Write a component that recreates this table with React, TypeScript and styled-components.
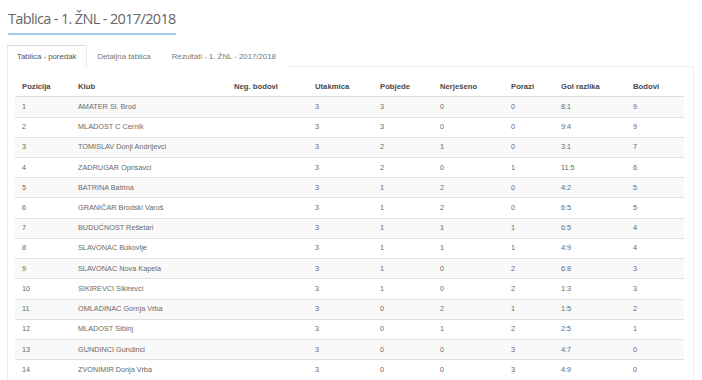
import React from 'react';
import styled, { createGlobalStyle } from 'styled-components';

const GlobalStyle = createGlobalStyle`
  html, body {
    margin: 0;
    padding: 0;
    background: #ffffff;
  }
  body {
    font-family: "Liberation Sans", Arial, sans-serif;
    color: #555;
  }
`;

const Page = styled.div`
  width: 687px;
  padding: 0 0 0 7px;
`;

const Title = styled.h2`
  display: inline-block;
  margin: 9px 0 0 1px;
  padding-bottom: 5px;
  font-family: "Open Sans", "Liberation Sans", sans-serif;
  font-weight: 400;
  font-size: 14.5px;
  line-height: 19px;
  letter-spacing: -0.65px;
  color: #666;
  border-bottom: 2px solid #a6cbe2;
`;

const TabBar = styled.ul`
  display: flex;
  margin: 10px 0 0;
  padding: 0;
  list-style: none;
`;

const Tab = styled.li<{ $active?: boolean }>`
  height: 21px;
  padding: 0 10px 0 9px;
  display: flex;
  align-items: center;
  font-size: 7.8px;
  color: ${(p) => (p.$active ? '#555' : '#777')};
  background: #fff;
  border: 1px solid ${(p) => (p.$active ? '#e3e8ec' : 'transparent')};
  border-top-color: ${(p) => (p.$active ? '#cfe0ea' : 'transparent')};
  border-bottom: none;
  margin-bottom: -1px;
  position: relative;
  z-index: 1;
`;

const Panel = styled.div`
  border: 1px solid #eceeef;
  border-bottom: none;
  padding: 10px 8px 0 7px;
  height: 320px;
`;

const Table = styled.table`
  width: 669px;
  border-collapse: collapse;
  table-layout: fixed;
`;

const HeadCell = styled.th`
  text-align: left;
  font-weight: 700;
  font-size: 7.7px;
  color: #4a4a4a;
  padding: 5.5px 7px;
  line-height: 8.3px;
  border-bottom: 1px solid #dcdcdc;
  white-space: nowrap;
`;

const Row = styled.tr<{ $odd: boolean }>`
  background: ${(p) => (p.$odd ? '#f9f9f9' : '#ffffff')};
`;

const Cell = styled.td`
  font-size: 7.3px;
  color: #6a6a6a;
  padding: 5.5px 7px;
  line-height: 8.23px;
  border-top: 1px solid #e2e2e2;
  white-space: nowrap;
`;

const columns: [string, number][] = [
  ['Pozicija', 56],
  ['Klub', 156],
  ['Neg. bodovi', 81],
  ['Utakmica', 65],
  ['Pobjede', 60],
  ['Nerješeno', 71],
  ['Porazi', 50],
  ['Gol razlika', 72],
  ['Bodovi', 58],
];

const rows: (string | number)[][] = [
  [1, 'AMATER Sl. Brod', '', 3, 3, 0, 0, '8:1', 9],
  [2, 'MLADOST C Cernik', '', 3, 3, 0, 0, '9:4', 9],
  [3, 'TOMISLAV Donji Andrijevci', '', 3, 2, 1, 0, '3:1', 7],
  [4, 'ZADRUGAR Oprisavci', '', 3, 2, 0, 1, '11:5', 6],
  [5, 'BATRINA Batrina', '', 3, 1, 2, 0, '4:2', 5],
  [6, 'GRANIČAR Brodski Varoš', '', 3, 1, 2, 0, '6:5', 5],
  [7, 'BUDUĆNOST Rešetari', '', 3, 1, 1, 1, '6:5', 4],
  [8, 'SLAVONAC Bukovlje', '', 3, 1, 1, 1, '4:9', 4],
  [9, 'SLAVONAC Nova Kapela', '', 3, 1, 0, 2, '6:8', 3],
  [10, 'SIKIREVCI Sikirevci', '', 3, 1, 0, 2, '1:3', 3],
  [11, 'OMLADINAC Gornja Vrba', '', 3, 0, 2, 1, '1:5', 2],
  [12, 'MLADOST Sibinj', '', 3, 0, 1, 2, '2:5', 1],
  [13, 'GUNDINCI Gundinci', '', 3, 0, 0, 3, '4:7', 0],
  [14, 'ZVONIMIR Donja Vrba', '', 3, 0, 0, 3, '4:9', 0],
];

const tabs = ['Tablica - poredak', 'Detaljna tablica', 'Rezultati - 1. ŽNL - 2017/2018'];

const App: React.FC = () => {
  return (
    <Page>
      <GlobalStyle />
      <Title>Tablica - 1. ŽNL - 2017/2018</Title>
      <TabBar>
        {tabs.map((t, i) => (
          <Tab key={t} $active={i === 0}>
            {t}
          </Tab>
        ))}
      </TabBar>
      <Panel>
        <Table>
          <colgroup>
            {columns.map(([name, w]) => (
              <col key={name} style={{ width: w }} />
            ))}
          </colgroup>
          <thead>
            <tr>
              {columns.map(([name]) => (
                <HeadCell key={name}>{name}</HeadCell>
              ))}
            </tr>
          </thead>
          <tbody>
            {rows.map((r, i) => (
              <Row key={i} $odd={i % 2 === 0}>
                {r.map((v, j) => (
                  <Cell key={j}>{v}</Cell>
                ))}
              </Row>
            ))}
          </tbody>
        </Table>
      </Panel>
    </Page>
  );
};

export default App;
